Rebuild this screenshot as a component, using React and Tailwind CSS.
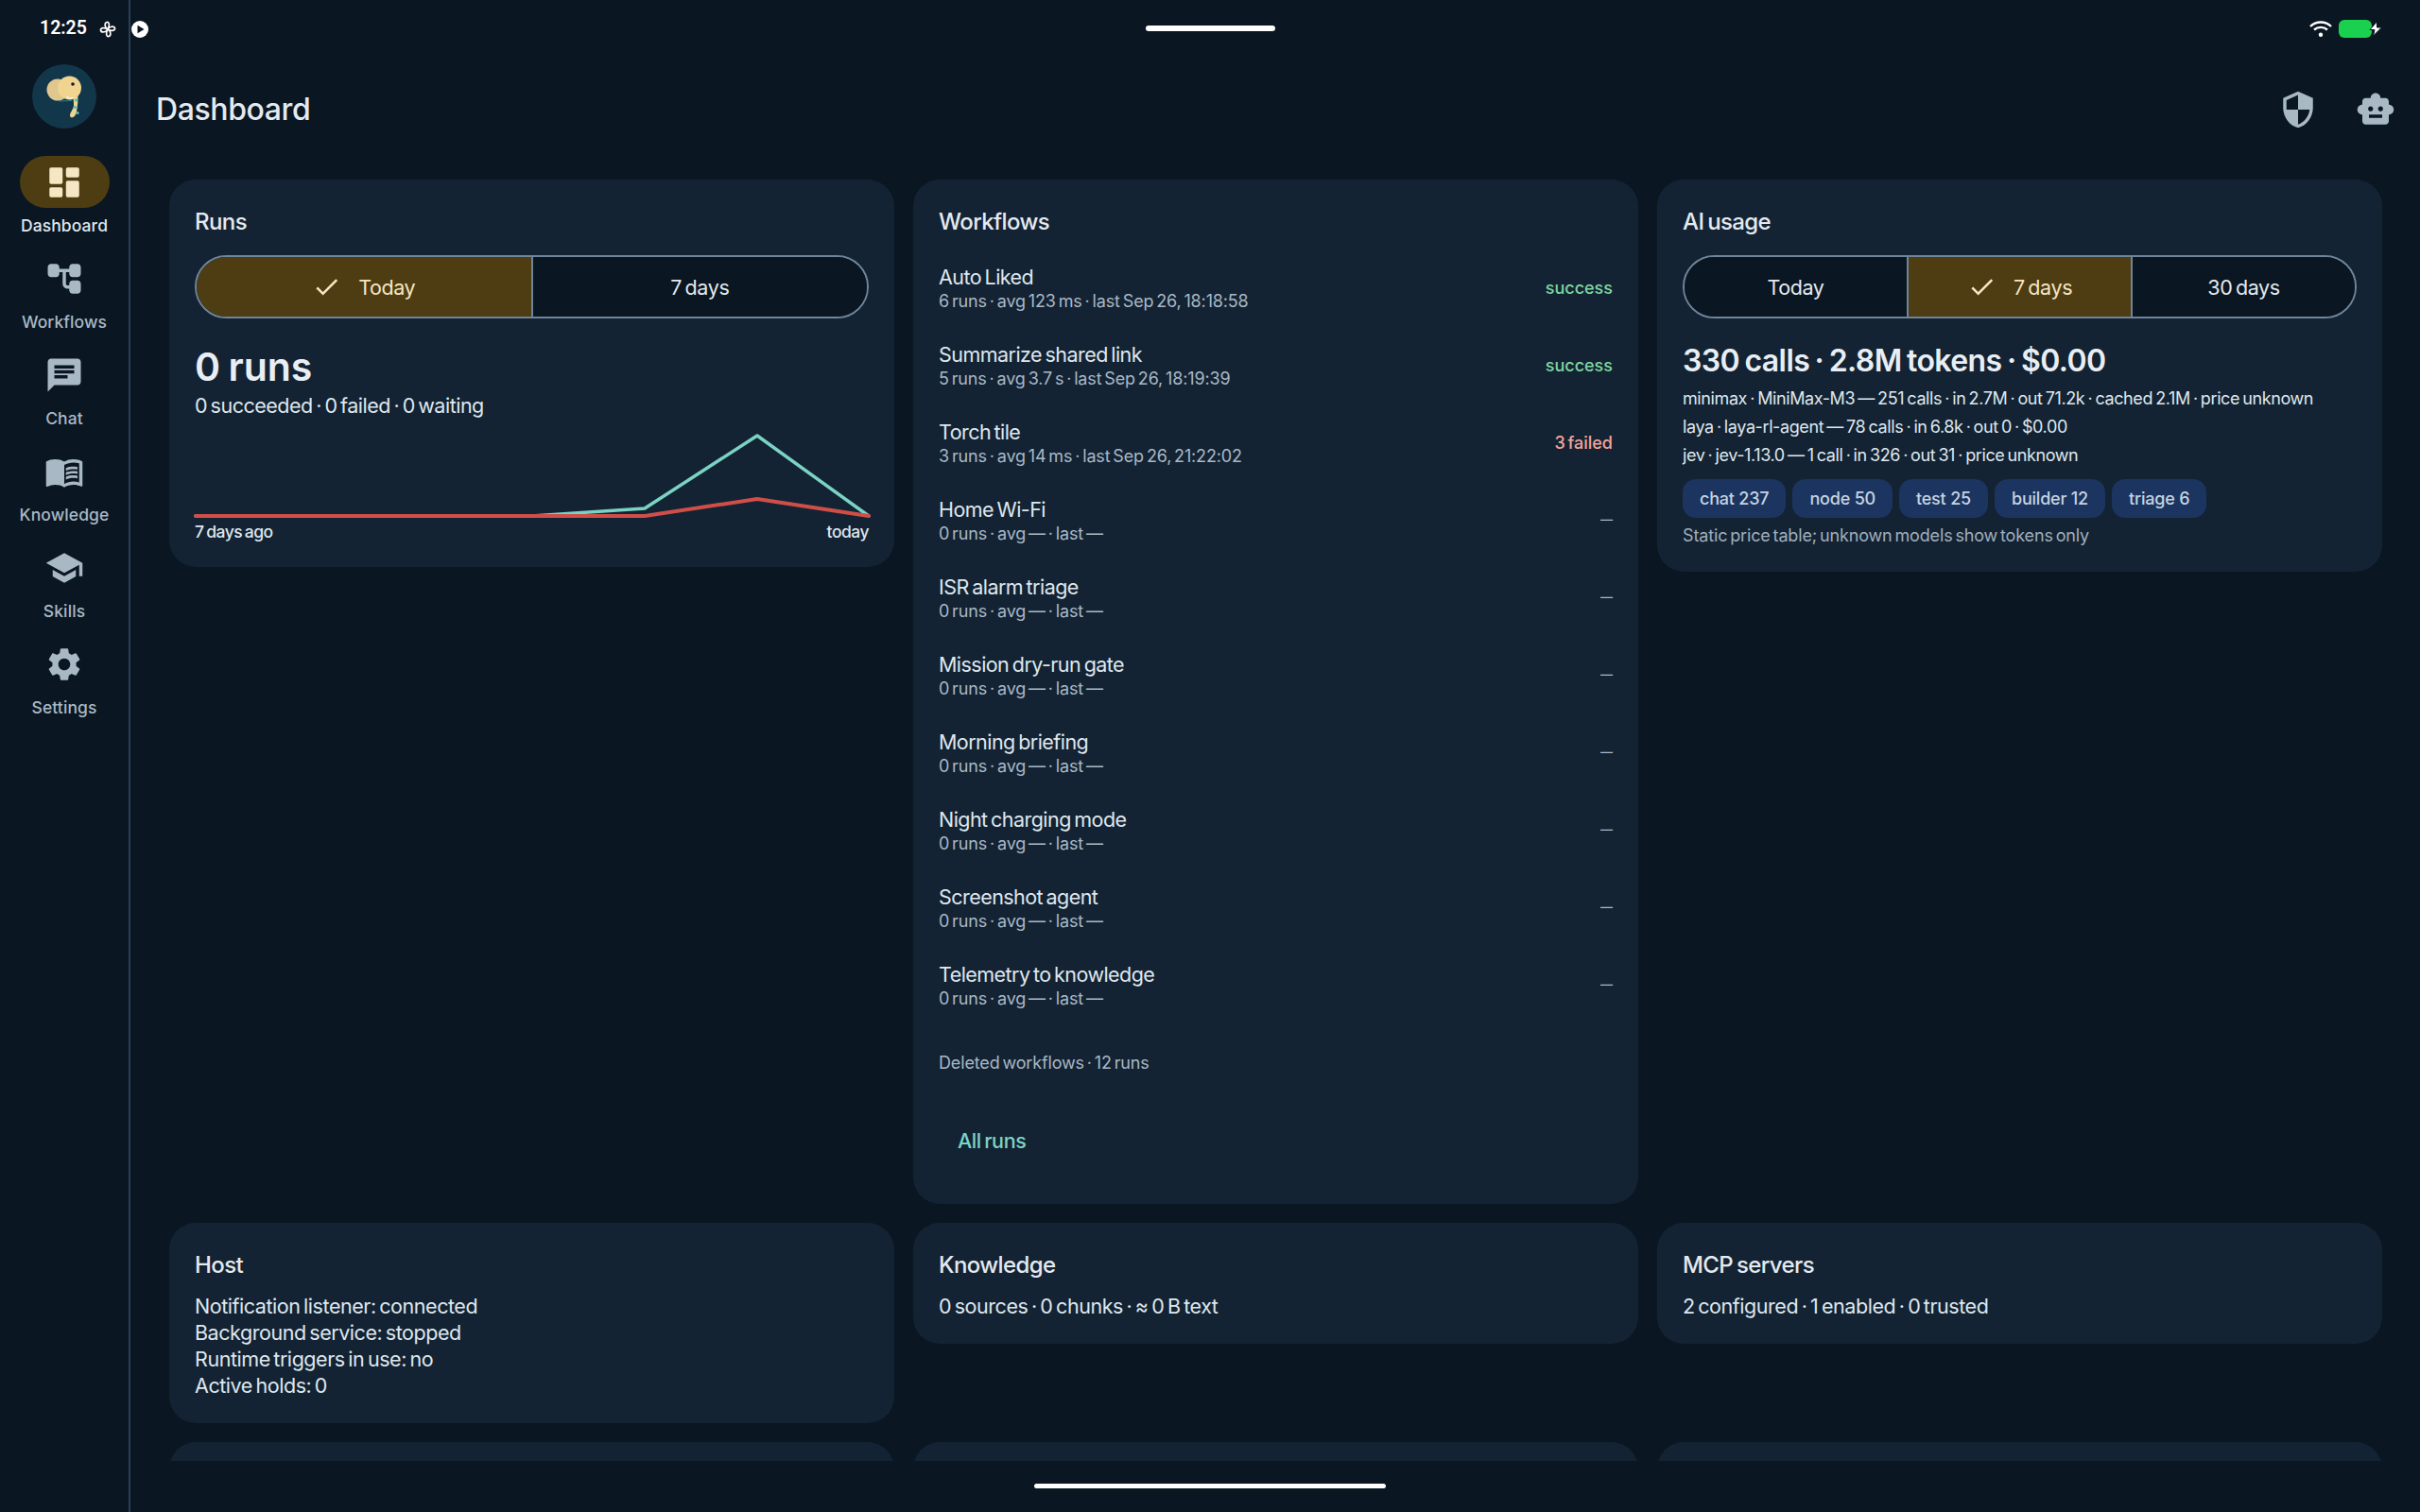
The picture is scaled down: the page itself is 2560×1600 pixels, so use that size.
import { MdChat, MdMenuBook, MdSchool, MdSettings, MdSecurity, MdSmartToy, MdCheck } from 'react-icons/md';

const DashboardIcon = ({ size = 42 }) => (
  <svg width={size} height={size} viewBox="0 0 24 24" fill="currentColor">
    <rect x="3" y="3" width="8" height="10" rx="1" />
    <rect x="13" y="3" width="8" height="6" rx="1" />
    <rect x="13" y="11" width="8" height="10" rx="1" />
    <rect x="3" y="15" width="8" height="6" rx="1" />
  </svg>
);

const TreeIcon = ({ size = 42 }) => (
  <svg width={size} height={size} viewBox="0 0 24 24" fill="currentColor">
    <path d="M17 11h3c1.11 0 2-.9 2-2V5c0-1.11-.9-2-2-2h-3c-1.11 0-2 .9-2 2v1H9.01V5c0-1.11-.9-2-2-2H4c-1.1 0-2 .9-2 2v4c0 1.11.9 2 2 2h3c1.11 0 2-.9 2-2V8h2v7.01c0 1.65 1.34 2.99 2.99 2.99H15v1c0 1.11.9 2 2 2h3c1.11 0 2-.9 2-2v-4c0-1.11-.9-2-2-2h-3c-1.11 0-2 .9-2 2v1h-1.01c-.54 0-.99-.45-.99-.99V8h2v1c0 1.1.9 2 2 2z" />
  </svg>
);

const Avatar = () => (
  <svg width="68" height="68" viewBox="0 0 68 68">
    <circle cx="34" cy="34" r="34" fill="#12364a" />
    <circle cx="27" cy="27" r="11.5" fill="#dfc78f" />
    <circle cx="39.5" cy="25" r="12.5" fill="#f0d490" />
    <path d="M48 30 C49 38 48 44 47 50 C46 57 40 58 40 54 C40 51 43 49 44 44 C44 41 44 38 43 35 Z" fill="#f0d490" />
    <circle cx="43" cy="21" r="1.8" fill="#0b1a26" />
    <path d="M37 34 C38 37 41 37 43 35" fill="none" stroke="#f5f5f5" strokeWidth="1.5" />
    <path d="M28 39 L42 38.5" fill="none" stroke="#2b7f86" strokeWidth="1" />
    <circle cx="46.5" cy="38" r="1.7" fill="#5fc4bb" />
    <circle cx="45.5" cy="45.5" r="1.7" fill="#5fc4bb" />
    <circle cx="48" cy="51.5" r="1.5" fill="#5fc4bb" />
  </svg>
);

const Pinwheel = () => (
  <svg width="18" height="18" viewBox="0 0 18 18" fill="none" stroke="#fff" strokeWidth="1.7" strokeLinejoin="round">
    <path d="M9 9 C6 8 5 2 8 1.5 C11 1 11 6 9 9 Z" />
    <path d="M9 9 C10 6 16 5 16.5 8 C17 11 12 11 9 9 Z" />
    <path d="M9 9 C12 10 13 16 10 16.5 C7 17 7 12 9 9 Z" />
    <path d="M9 9 C8 12 2 13 1.5 10 C1 7 6 7 9 9 Z" />
  </svg>
);

const nav = [
  { label: 'Workflows', Icon: TreeIcon },
  { label: 'Chat', Icon: MdChat },
  { label: 'Knowledge', Icon: MdMenuBook },
  { label: 'Skills', Icon: MdSchool },
  { label: 'Settings', Icon: MdSettings },
];

const workflows = [
  { name: 'Auto Liked', sub: '6 runs · avg 123 ms · last Sep 26, 18:18:58', status: 'success', cls: 'text-[#7fd6a2]' },
  { name: 'Summarize shared link', sub: '5 runs · avg 3.7 s · last Sep 26, 18:19:39', status: 'success', cls: 'text-[#7fd6a2]' },
  { name: 'Torch tile', sub: '3 runs · avg 14 ms · last Sep 26, 21:22:02', status: '3 failed', cls: 'text-[#f4a59a]' },
  { name: 'Home Wi-Fi' },
  { name: 'ISR alarm triage' },
  { name: 'Mission dry-run gate' },
  { name: 'Morning briefing' },
  { name: 'Night charging mode' },
  { name: 'Screenshot agent' },
  { name: 'Telemetry to knowledge' },
];

const Segmented = ({ options, selected }) => (
  <div className="flex h-[67px] rounded-full border-2 border-[#6f8599] overflow-hidden">
    {options.map((o, i) => (
      <div
        key={o}
        className={`flex-1 flex items-center justify-center gap-[18px] text-[21.5px] tracking-[-0.4px] ${i > 0 ? 'border-l-2 border-[#6f8599]' : ''} ${o === selected ? 'bg-[#4e3d12] text-[#f5e6c4]' : 'bg-[#0a1621] text-[#e3eaf0]'}`}
      >
        {o === selected && <MdCheck size={31} />}
        <span className="pt-[2px]">{o}</span>
      </div>
    ))}
  </div>
);

const Card = ({ title, children, className = '' }) => (
  <div className={`bg-[#132333] rounded-[28px] px-[27px] pt-[29px] ${className}`}>
    <h2 className="text-[24px] leading-[32px] font-medium text-[#e3eaf0] tracking-[-0.6px]">{title}</h2>
    {children}
  </div>
);

export default function App() {
  return (
    <div className="relative w-screen h-screen overflow-hidden flex bg-[#0a1621] font-[Inter,sans-serif] text-[#dfe7ee] [word-spacing:-2px]">
      {/* status bar */}
      <div className="absolute left-[42px] top-[18px] text-[19.5px] leading-[24px] font-semibold text-white font-[Roboto,sans-serif]">12:25</div>
      <div className="absolute left-[105px] top-[22px]"><Pinwheel /></div>
      <svg className="absolute left-[139px] top-[22px]" width="18" height="18" viewBox="0 0 18 18">
        <circle cx="9" cy="9" r="9" fill="#fff" />
        <path d="M6.5 4.8 L13.5 9 L6.5 13.2 Z" fill="#0a1621" />
      </svg>
      <div className="absolute left-[1212px] top-[27px] w-[137px] h-[6px] rounded-full bg-white" />
      <svg className="absolute left-[2443px] top-[21px]" width="24" height="19" viewBox="0 0 24 19" fill="none" stroke="#fff" strokeWidth="2.4">
        <path d="M1 7 C7 1 17 1 23 7" />
        <path d="M5 10.5 C9 7 15 7 19 10.5" />
        <circle cx="12" cy="15.8" r="2.2" fill="#fff" stroke="none" />
      </svg>
      <div className="absolute left-[2474px] top-[21px] w-[35px] h-[19px] rounded-[6px] bg-[#1ad14f]" />
      <svg className="absolute left-[2505px] top-[22px]" width="16" height="17" viewBox="0 0 16 17">
        <path d="M9.5 0.8 L2 9.5 H7 L5.5 16 L14.5 7 H9.5 Z" fill="#fff" stroke="#0a1621" strokeWidth="1" />
      </svg>
      <div className="absolute left-[1094px] top-[1570px] w-[372px] h-[5px] rounded-full bg-white" />

      {/* sidebar */}
      <aside className="w-[138px] shrink-0 h-full border-r-2 border-[#2a4058] flex flex-col items-center pt-[68px]">
        <Avatar />
        <nav className="mt-[29px] flex flex-col gap-[14px] items-center">
          <div className="flex flex-col items-center gap-[5px]">
            <div className="w-[95px] h-[55px] rounded-full bg-[#4e3d12] flex items-center justify-center text-[#f5e6c4]">
              <DashboardIcon />
            </div>
            <span className="text-[17.5px] leading-[28px] font-medium tracking-[0.1px] text-[#dfe7ee]">Dashboard</span>
          </div>
          {nav.map(({ label, Icon }) => (
            <div key={label} className="flex flex-col items-center gap-[5px]">
              <div className="w-[95px] h-[55px] flex items-center justify-center text-[#a9b8c5]">
                <Icon size={42} />
              </div>
              <span className="text-[17.5px] leading-[28px] font-medium tracking-[0.1px] text-[#a9b8c5]">{label}</span>
            </div>
          ))}
        </nav>
      </aside>

      {/* main */}
      <main className="flex-1 min-w-0">
        <header className="h-[190px] pt-[69px] pb-[27px] pl-[27px] pr-[26px] flex items-center justify-between">
          <h1 className="text-[32px] font-medium text-[#e3eaf0] tracking-[-0.4px]">Dashboard</h1>
          <div className="flex items-center gap-[40px] text-[#a9b8c5]">
            <MdSecurity size={42} />
            <MdSmartToy size={42} />
          </div>
        </header>

        <div className="h-[1356px] overflow-hidden pl-[41px] pr-[40px]">
          <div className="grid grid-cols-3 gap-5 items-start">
            <Card title="Runs" className="h-[410px]">
              <div className="mt-[19px]">
                <Segmented options={['Today', '7 days']} selected="Today" />
              </div>
              <div className="mt-[26px] text-[41px] leading-[50px] font-semibold text-[#e8eef3]">0 runs</div>
              <div className="text-[21.5px] leading-[32px] tracking-[-0.5px]">0 succeeded · 0 failed · 0 waiting</div>
              <svg className="block mt-[14px] -mx-[1px]" width="716" height="92" viewBox="0 0 716 92" fill="none" strokeLinejoin="round" strokeLinecap="round">
                <polyline points="2,87 358,87 477,79 596,2 714,87" stroke="#7bd3c4" strokeWidth="3.5" />
                <polyline points="2,87 477,87 596,69 714,87" stroke="#cf4f48" strokeWidth="4" />
              </svg>
              <div className="flex justify-between text-[17.5px] leading-[24px] font-medium tracking-[-0.5px] [word-spacing:-1.5px]">
                <span>7 days ago</span>
                <span>today</span>
              </div>
            </Card>

            <Card title="Workflows" className="h-[1084px]">
              <div className="mt-[6px] flex flex-col">
                {workflows.map((w) => (
                  <div key={w.name} className="h-[82px] pt-[12px] flex items-center justify-between">
                    <div>
                      <div className="text-[21.5px] leading-[28px] tracking-[-0.55px]">{w.name}</div>
                      <div className="text-[18px] leading-[23px] tracking-[-0.15px] text-[#a9b8c5]">{w.sub || '0 runs · avg — · last —'}</div>
                    </div>
                    {w.status ? (
                      <div className={`text-[18px] font-medium ${w.cls}`}>{w.status}</div>
                    ) : (
                      <div className="text-[13px] font-medium text-[#a9b8c5]">—</div>
                    )}
                  </div>
                ))}
              </div>
              <div className="mt-[36px] text-[18px] leading-[24px] tracking-[-0.15px] text-[#a9b8c5]">Deleted workflows · 12 runs</div>
              <div className="mt-[54px] ml-[20px] text-[21.5px] leading-[32px] font-medium tracking-[-0.4px] text-[#7bd3c4]">All runs</div>
            </Card>

            <Card title="AI usage" className="h-[415px]">
              <div className="mt-[19px]">
                <Segmented options={['Today', '7 days', '30 days']} selected="7 days" />
              </div>
              <div className="mt-[25px] text-[32px] leading-[40px] font-semibold tracking-[-0.6px] text-[#e8eef3]">330 calls · 2.8M tokens · $0.00</div>
              <div className="mt-[5px] flex flex-col text-[18px] leading-[30px] tracking-[-0.4px] [word-spacing:-1.5px] whitespace-nowrap">
                <span>minimax · MiniMax-M3 — 251 calls · in 2.7M · out 71.2k · cached 2.1M · price unknown</span>
                <span>laya · laya-rl-agent — 78 calls · in 6.8k · out 0 · $0.00</span>
                <span>jev · jev-1.13.0 — 1 call · in 326 · out 31 · price unknown</span>
              </div>
              <div className="mt-[10px] flex gap-[7px]">
                {['chat 237', 'node 50', 'test 25', 'builder 12', 'triage 6'].map((c) => (
                  <span key={c} className="h-[41px] px-[18px] rounded-[14px] bg-[#1b3560] flex items-center text-[18px] font-medium tracking-[-0.2px] [word-spacing:0px] text-[#c6d3e0]">{c}</span>
                ))}
              </div>
              <div className="mt-[7px] text-[18px] leading-[24px] tracking-[-0.15px] text-[#a0afbd]">Static price table; unknown models show tokens only</div>
            </Card>

            <Card title="Host" className="h-[212px]">
              <div className="mt-[13px] flex flex-col text-[21.5px] leading-[28px] tracking-[-0.45px]">
                <span>Notification listener: connected</span>
                <span>Background service: stopped</span>
                <span>Runtime triggers in use: no</span>
                <span>Active holds: 0</span>
              </div>
            </Card>
            <Card title="Knowledge" className="h-[128px]">
              <div className="mt-[13px] text-[21.5px] leading-[28px] tracking-[-0.45px]">0 sources · 0 chunks · ≈ 0 B text</div>
            </Card>
            <Card title="MCP servers" className="h-[128px]">
              <div className="mt-[13px] text-[21.5px] leading-[28px] tracking-[-0.45px]">2 configured · 1 enabled · 0 trusted</div>
            </Card>

            <div className="bg-[#132333] rounded-[28px] h-[200px]" />
            <div className="bg-[#132333] rounded-[28px] h-[200px]" />
            <div className="bg-[#132333] rounded-[28px] h-[200px]" />
          </div>
        </div>
      </main>
    </div>
  );
}
